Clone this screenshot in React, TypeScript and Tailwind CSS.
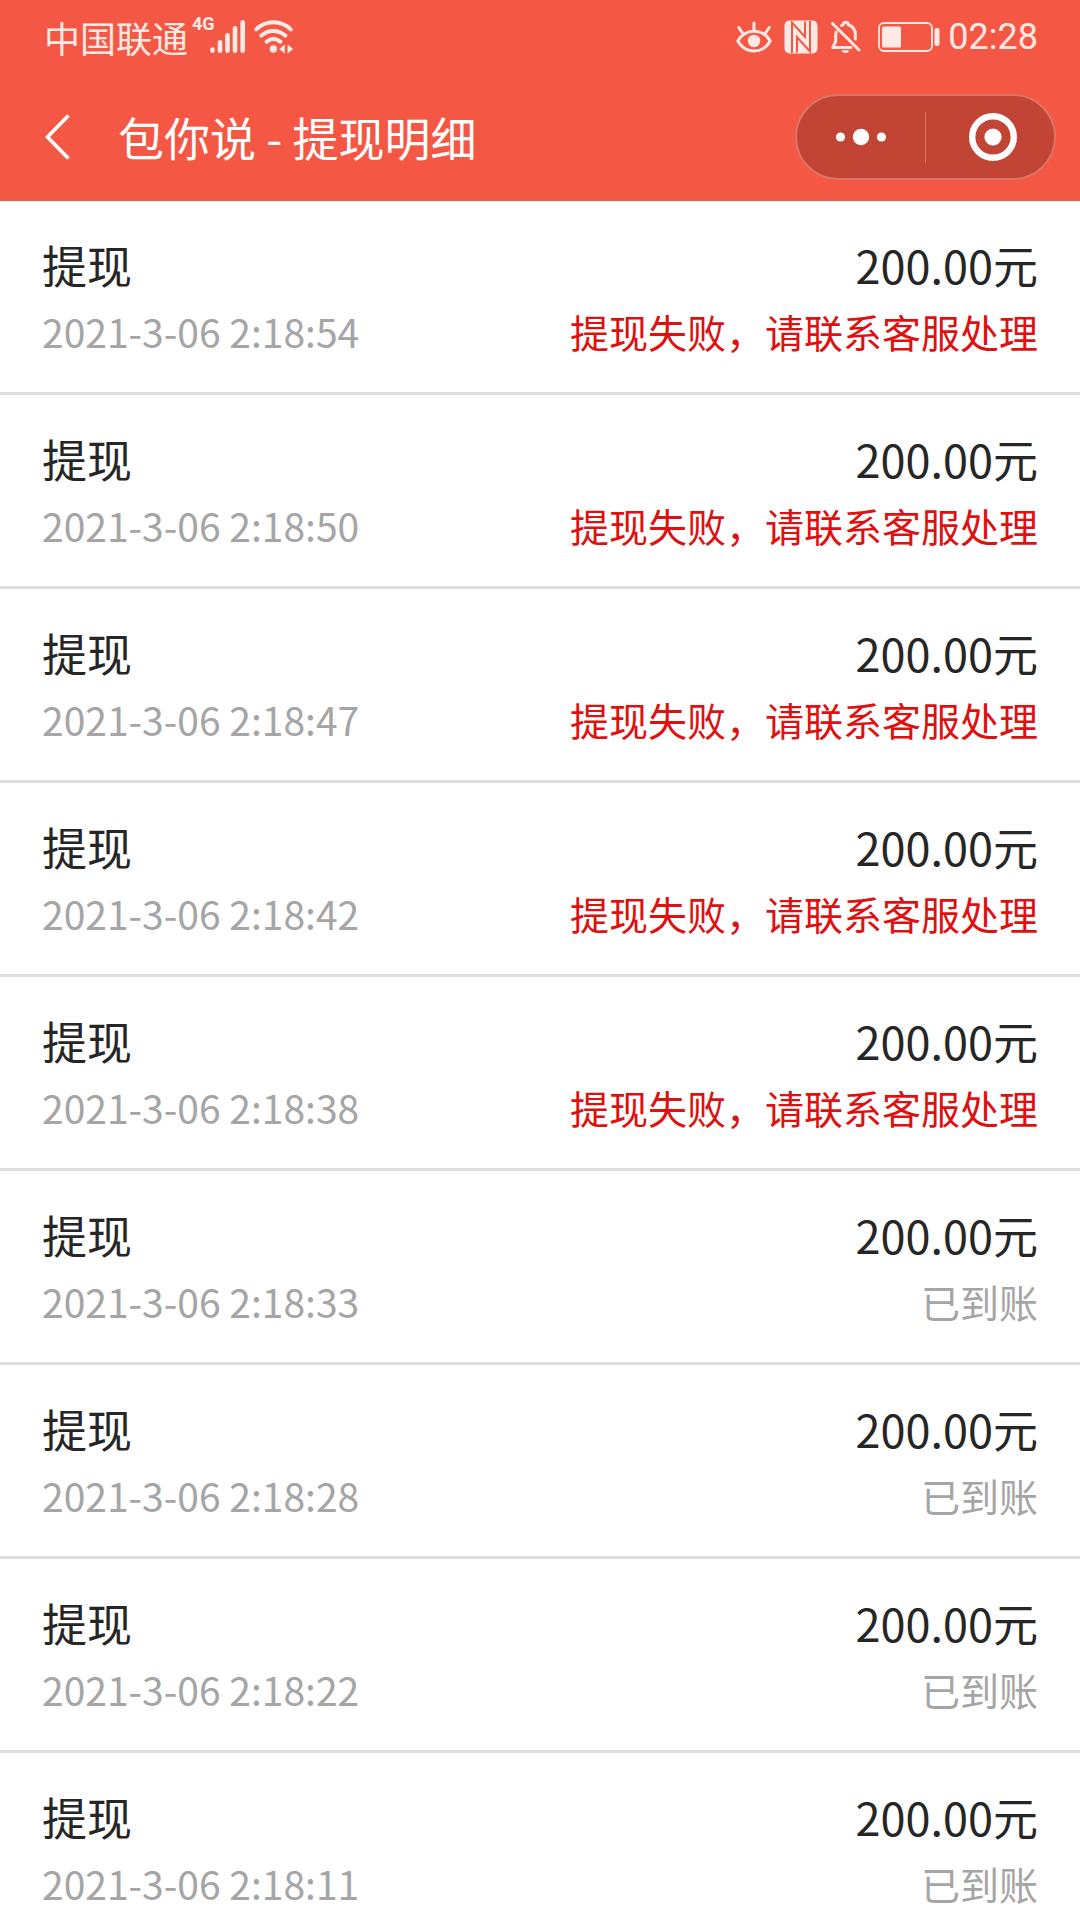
type Entry = { time: string; failed: boolean };

const entries: Entry[] = [
  { time: "2021-3-06 2:18:54", failed: true },
  { time: "2021-3-06 2:18:50", failed: true },
  { time: "2021-3-06 2:18:47", failed: true },
  { time: "2021-3-06 2:18:42", failed: true },
  { time: "2021-3-06 2:18:38", failed: true },
  { time: "2021-3-06 2:18:33", failed: false },
  { time: "2021-3-06 2:18:28", failed: false },
  { time: "2021-3-06 2:18:22", failed: false },
  { time: "2021-3-06 2:18:11", failed: false },
];

function SignalIcon() {
  return (
    <svg width="36" height="36" viewBox="0 0 36 36" stroke="currentColor" strokeWidth="4.6" strokeLinecap="round" aria-hidden="true">
      <path d="M2.5 30.6v1.2M10 23.300v8.500M17.5 16.300v15.500M25 9.300v22.500M32.700 3.200v28.600" />
    </svg>
  );
}

function WifiIcon() {
  return (
    <svg width="40" height="36" viewBox="0 0 40 36" fill="none" stroke="currentColor" strokeWidth="4" strokeLinecap="round" aria-hidden="true">
      <path d="M2.300 10.400C12 1 27 1 36.700 10.400" />
      <path d="M7.300 16.600C14.500 10.400 24 10.400 31.400 16.600" />
      <path d="M12.600 22.800c4.400-3.800 9.400-3.800 13.800 0" />
      <circle cx="19.400" cy="30" r="3.700" fill="currentColor" stroke="none" />
      <path d="M30.800 25.600v9l-5.600-4.500zM33.600 25.600v9l5.600-4.500z" fill="currentColor" stroke="none" />
    </svg>
  );
}

function EyeIcon() {
  return (
    <svg width="36" height="36" viewBox="0 0 36 36" fill="none" stroke="currentColor" strokeWidth="3" strokeLinecap="round" strokeLinejoin="round" aria-hidden="true">
      <path d="M1.800 22C5.500 15.500 11.300 12.200 18 12.200S30.500 15.500 34.200 22C30.500 28.500 24.700 32 18 32S5.500 28.500 1.800 22z" />
      <path d="M18 4v7M2.800 8.500l4 6M33.200 8.500l-4 6" />
      <circle cx="18" cy="22" r="6.200" fill="currentColor" stroke="none" />
    </svg>
  );
}

function NfcIcon() {
  return (
    <svg width="34" height="34" viewBox="0 0 34 34" fill="none" aria-hidden="true">
      <rect x="0.500" y="0.500" width="33" height="33" rx="5" fill="currentColor" />
      <path d="M8 33V2.500L21 17V1.500M26 1v30.500L13 17v15.500" stroke="#f45844" strokeWidth="2" />
    </svg>
  );
}

function MutedBellIcon() {
  return (
    <svg width="32" height="36" viewBox="0 0 32 36" fill="none" stroke="currentColor" strokeWidth="3" strokeLinecap="round" strokeLinejoin="round" aria-hidden="true">
      <path d="M2.500 4.500L29 31" />
      <path d="M6.200 13c-.4 1.300-.5 2.500-.5 4v5.500L2.700 28.500H21" />
      <path d="M11.500 6.500l1.800-.8c0-3.400 5-3.400 5 0 4.900 1.500 7.100 5.300 7.100 10.300v4" />
      <path d="M12.300 31.800h6.400c-.8 2.400-5.600 2.400-6.400 0z" fill="currentColor" strokeWidth="1" />
    </svg>
  );
}

function BatteryIcon() {
  return (
    <svg width="62" height="30" viewBox="0 0 62 30" fill="none" aria-hidden="true">
      <rect x="1" y="1" width="53" height="28" rx="5" stroke="currentColor" strokeWidth="1.800" />
      <rect x="4" y="4.500" width="19" height="21" rx="1.500" fill="currentColor" />
      <rect x="56.500" y="6" width="5" height="18" rx="2" fill="currentColor" />
    </svg>
  );
}

function StatusBar() {
  return (
    <div className="flex h-[73px] items-center justify-between pl-11 pr-[42px] text-[#ffe9e5]">
      <div className="flex items-center">
        <span className="text-[36px] leading-[46px]">中国联通</span>
        <span className="ml-1 w-[18px] self-start font-['Liberation_Sans_Narrow',Roboto] text-lg leading-5 font-bold">4G</span>
        <SignalIcon />
        <span className="ml-2 flex">
          <WifiIcon />
        </span>
      </div>
      <div className="flex items-center">
        <div className="flex items-center gap-3">
          <EyeIcon />
          <NfcIcon />
          <MutedBellIcon />
        </div>
        <span className="mr-2 ml-4 flex">
          <BatteryIcon />
        </span>
        <span className="font-[Roboto] text-[36px] leading-[46px]">02:28</span>
      </div>
    </div>
  );
}

function NavBar() {
  return (
    <div className="flex h-32 items-center pr-6 pl-10 text-white">
      <button type="button" aria-label="返回" className="flex h-20 w-[78px] items-center">
        <svg width="36" height="48" viewBox="0 0 36 48" fill="none" stroke="currentColor" strokeWidth="3.600" aria-hidden="true">
          <path d="M28.500 2.500L7.500 24l21 21.500" />
        </svg>
      </button>
      <h1 className="flex-1 pb-0.5 text-[46px] leading-[64px]">包你说 - 提现明细</h1>
      <div className="flex h-[86px] w-[261px] items-center rounded-full border-2 border-[#dc7466] bg-[#c24435]">
        <button type="button" aria-label="更多" className="flex h-full w-32 items-center justify-center">
          <svg width="52" height="18" viewBox="0 0 52 18" fill="currentColor" aria-hidden="true">
            <circle cx="5.500" cy="9" r="4.600" />
            <circle cx="26" cy="9" r="8.200" />
            <circle cx="46.500" cy="9" r="4.600" />
          </svg>
        </button>
        <span className="h-[51px] w-px bg-[#dc7466]" />
        <button type="button" aria-label="关闭" className="flex h-full flex-1 items-center justify-center pl-1.5">
          <svg width="50" height="50" viewBox="0 0 50 50" aria-hidden="true">
            <circle cx="25" cy="25" r="20.800" fill="none" stroke="currentColor" strokeWidth="6.400" />
            <circle cx="25" cy="25" r="8.600" fill="currentColor" />
          </svg>
        </button>
      </div>
    </div>
  );
}

function EntryRow({ time, failed }: Entry) {
  return (
    <li className="border-b-3 border-[#dedede] px-[42px] pt-[31px] pb-7">
      <div className="flex justify-between text-[45px] leading-[66px] text-[#262626]">
        <span>提现</span>
        <span>200.00元</span>
      </div>
      <div className="flex justify-between text-[39px] leading-[66px] text-[#a5a5a5]">
        <time>{time}</time>
        {failed ? <span className="text-[#de1010]">提现失败，请联系客服处理</span> : <span>已到账</span>}
      </div>
    </li>
  );
}

export default function App() {
  return (
    <div lang="zh-CN" className="flex h-dvh flex-col bg-white font-['Noto_Sans_CJK_SC',sans-serif]">
      <header className="shrink-0 bg-[#f45844]">
        <StatusBar />
        <NavBar />
      </header>
      <main className="min-h-0 flex-1 overflow-y-auto [scrollbar-width:none]">
        <ul>
          {entries.map((entry) => (
            <EntryRow key={entry.time} {...entry} />
          ))}
        </ul>
      </main>
    </div>
  );
}
